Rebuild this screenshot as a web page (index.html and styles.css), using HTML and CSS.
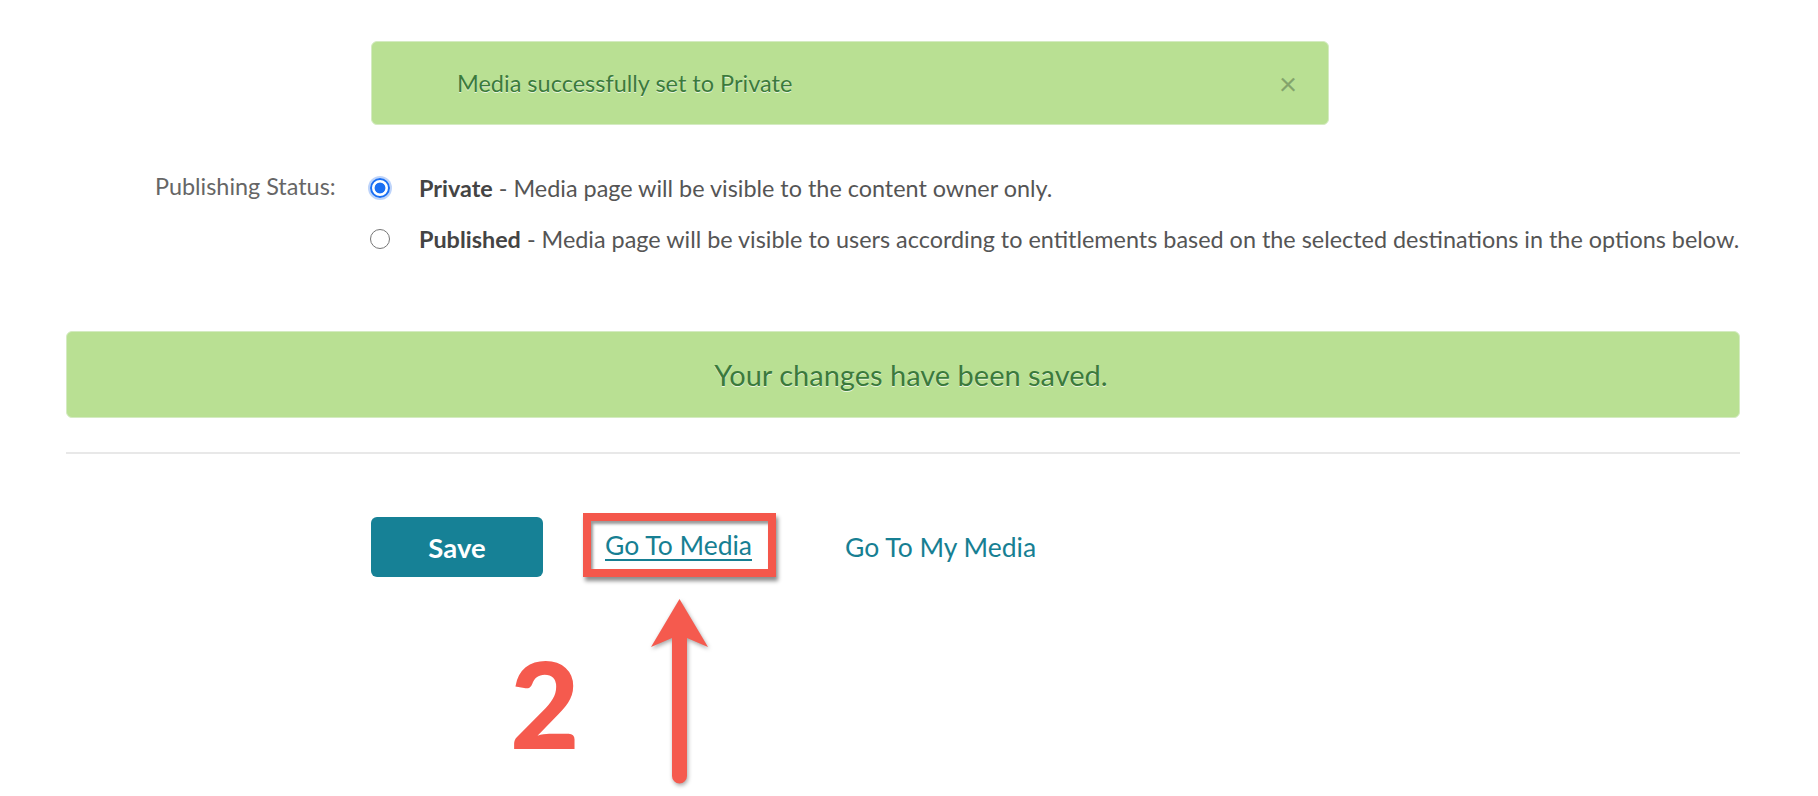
FILE: index.html
```html
<!DOCTYPE html>
<html lang="en">
<head>
<meta charset="utf-8">
<title>Publishing Status</title>
<link rel="stylesheet" href="styles.css">
</head>
<body>
<div class="page">
  <div class="alert alert-top">
    <span class="alert-text">Media successfully set to Private</span>
    <button class="close" type="button" aria-label="Close">&times;</button>
  </div>

  <div class="status-row">
    <div class="status-label">Publishing Status:</div>
    <div class="options">
      <label class="option">
        <input type="radio" name="status" checked>
        <span class="option-text"><b>Private</b> - Media page will be visible to the content owner only.</span>
      </label>
      <label class="option">
        <input type="radio" name="status">
        <span class="option-text"><b>Published</b> - Media page will be visible to users according to entitlements based on the selected destinations in the options below.</span>
      </label>
    </div>
  </div>

  <div class="alert alert-saved"><span>Your changes have been saved.</span></div>

  <hr class="separator">

  <div class="actions">
    <button class="btn-save" type="button">Save</button>
    <span class="highlight"><a href="#" class="link link-underline">Go To Media</a></span>
    <a href="#" class="link link-plain">Go To My Media</a>
  </div>

  <div class="annotation">
    <span class="step">2</span>
    <svg class="arrow" width="70" height="195" viewBox="0 0 70 195" aria-hidden="true">
      <path d="M34.5 5 L63 53 L42 44 L42 182 A7.5 7.5 0 0 1 27 182 L27 44 L6 53 Z" fill="#f55a4e"/>
    </svg>
  </div>
</div>
</body>
</html>
```

FILE: styles.css
```css
body {
  margin: 0;
  background: #ffffff;
  font-family: Lato, "Noto Sans", sans-serif;
  color: #555555;
}

.page {
  width: 1818px;
  height: 796px;
  overflow: hidden;
}

.alert {
  box-sizing: border-box;
  display: flex;
  align-items: center;
  background: #b9e093;
  border: 1px solid #d4ebc1;
  border-radius: 6px;
  color: #3b7a3c;
  text-shadow: 0 1px 0 rgba(255, 255, 255, 0.7);
}

.alert-top {
  margin: 41px 0 0 371px;
  width: 958px;
  height: 84px;
  padding: 0 31px 0 85px;
  justify-content: space-between;
  font-size: 23.5px;
}

.close {
  border: 0;
  padding: 0;
  background: none;
  font-family: Lato, sans-serif;
  font-size: 31px;
  line-height: 1;
  color: #84a46c;
  text-shadow: none;
}

.status-row {
  display: flex;
  margin: 37px 0 0 155px;
  font-size: 23.4px;
}

.status-label {
  width: 215px;
  line-height: 48px;
  color: #666666;
}

.options {
  display: flex;
  flex-direction: column;
}

.option {
  display: flex;
  align-items: center;
  height: 51px;
  color: #555555;
}

.option b {
  color: #444444;
}

.option input {
  appearance: none;
  -webkit-appearance: none;
  box-sizing: border-box;
  width: 20px;
  height: 20px;
  margin: 0 29px 0 0;
  border: 1.5px solid #767676;
  border-radius: 50%;
  background: #ffffff;
}

.option input:checked {
  border: 2px solid #1b6ff3;
  background: radial-gradient(circle, #1b6ff3 0 5px, #ffffff 5.8px);
  box-shadow: 0 0 0 2px rgba(110, 160, 245, 0.45);
}

.alert-saved {
  margin: 67px 0 0 66px;
  width: 1674px;
  height: 87px;
  padding-left: 16px;
  justify-content: center;
  font-size: 29px;
}

.separator {
  margin: 34px 0 0 66px;
  width: 1674px;
  height: 2px;
  border: 0;
  background: #e8e8e8;
}

.actions {
  display: flex;
  align-items: flex-end;
  margin: 59px 0 0 371px;
  height: 64px;
}

.btn-save {
  width: 172px;
  height: 60px;
  border: 0;
  border-radius: 6px;
  background: #168196;
  color: #ffffff;
  font-family: Lato, sans-serif;
  font-weight: 700;
  font-size: 27.5px;
}

.highlight {
  box-sizing: border-box;
  display: flex;
  align-items: center;
  margin-left: 40px;
  height: 64px;
  padding: 0 16px 0 14px;
  border: 8px solid #f4574b;
  box-shadow: 2px 4px 4px rgba(0, 0, 0, 0.45), inset 2px 3px 3px rgba(0, 0, 0, 0.4);
}

.link {
  color: #177f93;
  font-size: 26.5px;
  text-decoration: none;
}

.link-underline {
  text-decoration: underline;
  text-decoration-thickness: 2px;
  text-underline-offset: 4px;
}

.link-plain {
  margin: 0 0 14px 69px;
}

.annotation {
  display: flex;
  align-items: flex-start;
  margin: 17px 0 0 510px;
}

.step {
  margin-top: 49px;
  font-size: 120px;
  line-height: 1;
  font-weight: 900;
  color: #f55a4e;
}

.arrow {
  margin-left: 65px;
  filter: drop-shadow(1px 2px 2px rgba(0, 0, 0, 0.35));
}
```
